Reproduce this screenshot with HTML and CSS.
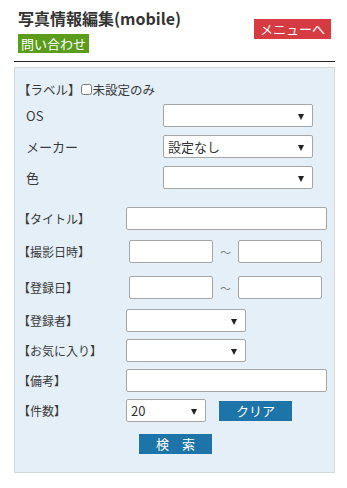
FILE: index.html
```html
<!DOCTYPE html>
<html lang="ja">
<head>
  <meta charset="UTF-8" />
  <meta name="viewport" content="width=device-width, initial-scale=1.0" />
  <title>写真情報編集(mobile)</title>
  <link rel="stylesheet" href="styles.css">
</head>
<body>
  <div class="page">
    <div class="head">
      <div class="head-left">
        <h1 class="title">写真情報編集(mobile)</h1>
        <a class="btn btn-green" href="#">問い合わせ</a>
      </div>
      <a class="btn btn-red" href="#">メニューへ</a>
    </div>
    <hr class="rule">

    <form class="panel">
      <div class="label-row">
        <span class="lbl-inline">【ラベル】</span>
        <input type="checkbox" class="chk">
        <span>未設定のみ</span>
      </div>
      <!-- label sub fields -->
      <div class="sub-row">
        <span class="sub-label">OS</span>
        <span class="sel w150"><select></select></span>
      </div>
      <div class="sub-row">
        <span class="sub-label">メーカー</span>
        <span class="sel w150"><select><option>設定なし</option></select></span>
      </div>
      <div class="sub-row">
        <span class="sub-label">色</span>
        <span class="sel w150"><select></select></span>
      </div>

      <div class="row row-title">
        <span class="lbl">【タイトル】</span>
        <input type="text" class="txt w200">
      </div>
      <div class="row row-date">
        <span class="lbl">【撮影日時】</span>
        <input type="text" class="txt date">
        <span class="tilde">～</span>
        <input type="text" class="txt date">
      </div>
      <div class="row row-date2">
        <span class="lbl">【登録日】</span>
        <input type="text" class="txt date">
        <span class="tilde">～</span>
        <input type="text" class="txt date">
      </div>
      <div class="row row-user">
        <span class="lbl">【登録者】</span>
        <span class="sel w120"><select></select></span>
      </div>
      <div class="row row-tight">
        <span class="lbl">【お気に入り】</span>
        <span class="sel w120"><select></select></span>
      </div>
      <div class="row row-tight">
        <span class="lbl">【備考】</span>
        <input type="text" class="txt w200">
      </div>
      <div class="row row-tight">
        <span class="lbl">【件数】</span>
        <span class="sel w80"><select><option>20</option></select></span>
        <button type="button" class="btn-blue btn-clear">クリア</button>
      </div>
      <div class="search-row">
        <button type="button" class="btn-blue btn-search">検　索</button>
      </div>
    </form>
  </div>
</body>
</html>
```
FILE: styles.css
```css
body {
  margin: 0;
  font-family: "Noto Sans CJK JP", "Noto Sans", sans-serif;
  color: #3a3a3a;
  background: #fff;
}
.page {
  width: 321px;
  padding: 8px 0 0 14px;
}
.head {
  display: flex;
  justify-content: space-between;
  align-items: flex-start;
  padding-left: 4px;
}
.head-left {
  display: flex;
  flex-direction: column;
  align-items: flex-start;
}
.title {
  margin: 0;
  font-size: 16px;
  line-height: 20px;
  font-weight: bold;
  color: #333;
}
.btn {
  display: block;
  color: #fff;
  text-decoration: none;
  font-size: 13px;
  line-height: 19px;
  height: 19px;
}
.btn-green {
  margin-top: 6px;
  padding: 0 3px;
  background: #5b9c1c;
}
.btn-red {
  margin-top: 11px;
  margin-right: 4px;
  width: 77px;
  height: 20px;
  line-height: 20px;
  text-align: center;
  background: #d63b41;
}
.rule {
  margin: 8px 0 0;
  border: 0;
  border-top: 1px solid #222;
}
.panel {
  margin-top: 5px;
  background: #e4eff8;
  border: 1px solid #d3d8dd;
  padding: 12px 0 18px;
  font-size: 12px;
}
.label-row {
  display: flex;
  align-items: center;
  height: 18px;
  padding-left: 3px;
  font-size: 12.5px;
}
.chk {
  margin: 0 1px 0 0;
  width: 11px;
  height: 11px;
}
.sub-row {
  display: flex;
  align-items: center;
  margin-top: 8px;
  padding-left: 11px;
  font-size: 13px;
}
.label-row + .sub-row {
  margin-top: 6px;
}
.sub-label {
  width: 137px;
}
.row {
  display: flex;
  align-items: center;
  padding-left: 3px;
  margin-top: 7px;
}
.row-title { margin-top: 18px; }
.row-date { margin-top: 10px; }
.row-date2 { margin-top: 13px; }
.row-user { margin-top: 10px; }
.lbl {
  width: 108px;
  flex: none;
}
.txt {
  box-sizing: border-box;
  height: 23px;
  margin: 0;
  border: 1px solid #a6a6a6;
  border-radius: 2px;
  background: #fff;
}
.w200 { width: 201px; }
.date {
  width: 84px;
}
.row-date .date:first-of-type,
.row-date2 .date:first-of-type {
  margin-left: 3px;
}
.tilde {
  width: 25px;
  text-align: center;
  color: #777;
  font-size: 11px;
}
.sel {
  position: relative;
  display: block;
  height: 23px;
}
.sel::after {
  content: "";
  position: absolute;
  right: 9px;
  top: 10px;
  border-left: 3px solid transparent;
  border-right: 3px solid transparent;
  border-top: 6px solid #222;
}
.sel select {
  appearance: none;
  -webkit-appearance: none;
  box-sizing: border-box;
  width: 100%;
  height: 23px;
  margin: 0;
  padding: 0 4px;
  border: 1px solid #a6a6a6;
  border-radius: 2px;
  background: #fff;
  font-family: inherit;
  font-size: 13px;
  color: #333;
}
.w150 { width: 150px; }
.w120 { width: 120px; }
.w80 { width: 80px; }
.btn-blue {
  border: 0;
  margin: 0;
  padding: 0;
  height: 20px;
  background: #1d74a8;
  color: #fff;
  font-family: inherit;
  font-size: 13px;
  line-height: 20px;
}
.btn-clear {
  width: 73px;
  margin-left: 13px;
}
.search-row {
  margin-top: 12px;
  padding-left: 124px;
}
.btn-search {
  width: 73px;
}
```
